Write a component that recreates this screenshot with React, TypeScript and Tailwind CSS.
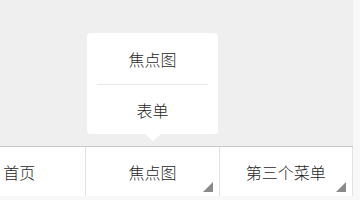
import React from "react";

const font = { fontFamily: '"Noto Sans CJK SC", "Noto Sans", sans-serif' };

function Corner() {
  return (
    <span className="absolute right-[6px] bottom-[4px] h-0 w-0 border-l-[10px] border-l-transparent border-b-[10px] border-b-[#8a8a8a]" />
  );
}

export default function App() {
  return (
    <div className="h-[200px] w-[360px] overflow-hidden bg-[#f8f8f8]" style={font}>
      <div className="relative -ml-[47px] w-[400px]">
        <div className="h-[146px] bg-[#efefef]" />
        <div className="flex h-[50px] border-t border-[#c9c9c9] bg-white text-[16px] font-light text-[#1f1f1f]">
          <div className="relative flex flex-1 items-center justify-center border-r border-[#e3e3e3]">
            首页
          </div>
          <div className="relative flex flex-1 items-center justify-center border-r border-[#e3e3e3]">
            焦点图
            <Corner />
          </div>
          <div className="relative flex flex-1 items-center justify-center border-r border-[#e3e3e3]">
            第三个菜单
            <Corner />
          </div>
        </div>
        <div className="absolute left-[134px] top-[33px] w-[131px] rounded-[4px] bg-white text-[16px] font-light text-[#1f1f1f]">
          <div className="flex h-[51px] items-center justify-center">焦点图</div>
          <div className="mx-[10px] h-px bg-[#e8e8e8]" />
          <div className="flex h-[49px] items-center justify-center">表单</div>
          <span className="absolute left-1/2 top-full -ml-[8px] h-0 w-0 border-x-[8px] border-x-transparent border-t-[7px] border-t-white" />
        </div>
      </div>
    </div>
  );
}
